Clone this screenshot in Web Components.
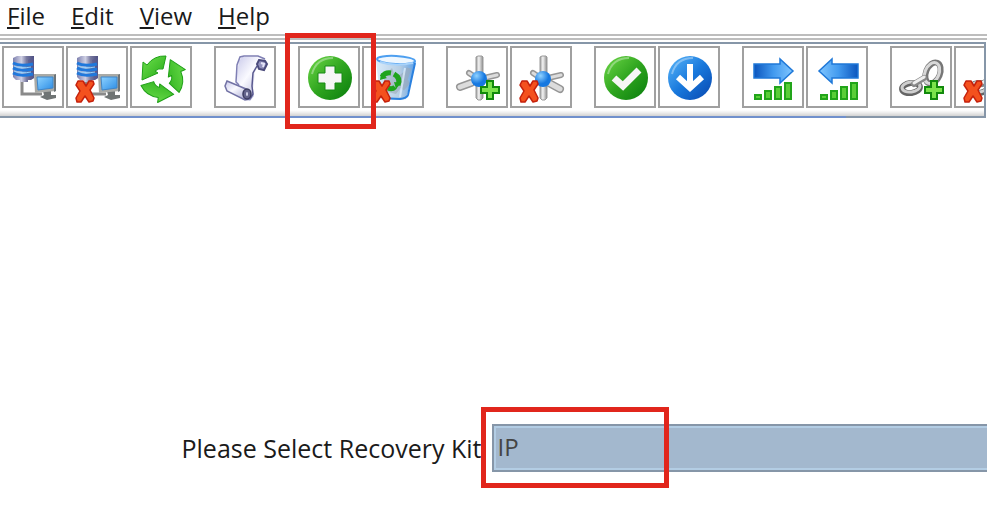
<!DOCTYPE html>
<html lang="en">
<head>
<meta charset="utf-8">
<title>Create Resource</title>
<style>
  body {
    margin: 0;
    background: #fff;
    color: #1a1a1a;
    font-family: "Open Sans", "Noto Sans", sans-serif;
    font-size: 24px;
    overflow-x: hidden;
    --frame: #8696a8;
    --highlight: #e1261c;
  }
</style>
</head>
<body>
<kit-app></kit-app>

<script>
// shared pieces used by several icons
const gradients = `
  <defs>
    <linearGradient id="green" x1="0" y1="0" x2="1" y2="1"><stop offset="0" stop-color="#6fd848"/><stop offset=".5" stop-color="#2fa51f"/><stop offset="1" stop-color="#087c0c"/></linearGradient>
    <linearGradient id="blue" x1="0" y1="0" x2="1" y2="1"><stop offset="0" stop-color="#5cb8fa"/><stop offset=".5" stop-color="#1878dc"/><stop offset="1" stop-color="#0846ae"/></linearGradient>
    <linearGradient id="leaf" x1="0" y1="0" x2="1" y2="1"><stop offset="0" stop-color="#6fe04e"/><stop offset=".6" stop-color="#42bf2c"/><stop offset="1" stop-color="#1f9a14"/></linearGradient>
    <linearGradient id="metal"><stop offset="0" stop-color="#999"/><stop offset=".4" stop-color="#f4f4f4"/><stop offset="1" stop-color="#8c8c8c"/></linearGradient>
    <linearGradient id="server"><stop offset="0" stop-color="#7d80ae"/><stop offset=".4" stop-color="#cfd0e4"/><stop offset=".65" stop-color="#77789f"/><stop offset="1" stop-color="#4c4e80"/></linearGradient>
    <linearGradient id="screen" x1="0" y1="0" x2="1" y2="1"><stop offset="0" stop-color="#8dd2ff"/><stop offset="1" stop-color="#2c8de6"/></linearGradient>
    <linearGradient id="paper" x1="0" y1="0" x2="1" y2="1"><stop offset="0" stop-color="#c9c9ea"/><stop offset=".4" stop-color="#fafaff"/><stop offset="1" stop-color="#9a9acb"/></linearGradient>
    <linearGradient id="east"><stop offset="0" stop-color="#0b55bd"/><stop offset=".5" stop-color="#429aef"/><stop offset="1" stop-color="#80c6ff"/></linearGradient>
    <linearGradient id="west"><stop offset="0" stop-color="#80c6ff"/><stop offset=".5" stop-color="#429aef"/><stop offset="1" stop-color="#0b55bd"/></linearGradient>
    <linearGradient id="glass"><stop offset="0" stop-color="#d9ebfa"/><stop offset=".6" stop-color="#b5cde3"/><stop offset="1" stop-color="#5a9fe8"/></linearGradient>
    <radialGradient id="ball" cx=".35" cy=".3"><stop offset="0" stop-color="#90d2ff"/><stop offset="1" stop-color="#1678e0"/></radialGradient>
  </defs>`;

const cross = `<path d="M12 35h5l3 5 3-5h4l1 3-4 6 4 8-1 3-4 1-4-6-4 6h-4l-1-4 4-7-4-6z" fill="#f4511e" stroke="#c5210c" stroke-width="1.5" stroke-linejoin="round"/>`;
const plus = `<path d="M41 35h6v6h6v6h-6v6h-6v-6h-6v-6h6z" fill="#7be34b" stroke="#128a0c" stroke-width="2"/>`;

const server = `
  <path d="M20 34v14h20" fill="none" stroke="#8a8a8a" stroke-width="3"/>
  <path d="M11 12l4-2h17v22l-3 2h-3v2h-8v-2h-4l-3-3z" fill="url(#server)"/>
  <path d="M26 14l6-3v21l-4 2z" fill="#5a5c91" opacity=".6"/>
  <path d="M11 17q7 4 20 1M11 22q7 4 20 1M11 27q7 4 20 1" fill="none" stroke="#1f78dc" stroke-width="3"/>
  <path d="M12 20q7 3 17 1M12 25q7 3 17 1" fill="none" stroke="#8fd1ff" stroke-width="1"/>
  <path d="M41 45h8v4h5v3l-9 2-7-3 4-2z" fill="#6f7474"/>
  <path d="M32 28h22v17l-21 2z" fill="#a9aaa6"/>
  <path d="M52 29l2-1v17l-2 1z" fill="#6d7478"/>
  <path d="M35 31h16v11l-15 2z" fill="url(#screen)" stroke="#3f86c9" stroke-width="1"/>`;

const recycleArrow = `M36 10A22 22 0 0 0 17 19L13 16 12 34 28 27 25 25A9 9 0 0 1 33 23Z`;
const disc = fill => `
  <circle cx="32" cy="32" r="22" fill="url(#${fill})"/>
  <path d="M14 28C17 17 25 12 35 12" fill="none" stroke="#fff" stroke-width="2" opacity=".35"/>`;

const arm = (d, width = 8) => `
  <path d="${d}" fill="none" stroke="#969696" stroke-width="${width}" stroke-linecap="round"/>
  <path d="${d}" fill="none" stroke="#dcdcdc" stroke-width="${width - 3}" stroke-linecap="round"/>`;
const post = `<path d="M30 11l2-1h4l1 1v41l-2 2h-3l-2-2z" fill="url(#metal)" stroke="#999" stroke-width="1"/>`;
const hub = `<circle cx="33" cy="33" r="8" fill="url(#ball)"/>`;

const bars = x => [0, 1, 2, 3].map(i => `
  <rect x="${x + i * 10 + 1}" y="${[49, 45, 41, 37][i]}" width="6" height="${[4, 8, 12, 16][i]}" fill="#5ace38" stroke="#22a51a" stroke-width="2"/>`).join("");

const chain = `
  <g fill="none" stroke-linecap="round">
    <ellipse cx="21" cy="42" rx="9" ry="5" transform="rotate(-8 21 42)" stroke="#656565" stroke-width="6"/>
    <ellipse cx="21" cy="41" rx="9" ry="5" transform="rotate(-8 21 41)" stroke="#cfcfcf" stroke-width="3"/>
    <ellipse cx="43" cy="27" rx="7" ry="11" transform="rotate(22 43 27)" stroke="#777" stroke-width="6"/>
    <ellipse cx="42" cy="27" rx="7" ry="11" transform="rotate(22 42 27)" stroke="#d8d8d8" stroke-width="3"/>
    <path d="M24 38l10-6" stroke="#888" stroke-width="6"/>
    <path d="M24 37l10-6" stroke="#eee" stroke-width="3"/>
  </g>`;

const icons = {
  connect: server,
  disconnect: server + cross,
  refresh: [0, 120, 240].map(a => `<path transform="rotate(${a} 32 32)" d="${recycleArrow}" fill="url(#leaf)" stroke="#1fa016" stroke-width="1" stroke-linejoin="round"/>`).join(""),
  log: `
    <path d="M28 11h17l6 2 2 3-2 5-4 1-2-4-4 8-2 17 1 7-4 5-8-2-6-9 1-17 2-12z" fill="url(#paper)"/>
    <path d="M25 39l-3-3 1-17 3-8 4-1h14l7 3" fill="none" stroke="#7f7fb4" stroke-width="1.5"/>
    <path d="M45 14l6 1 2 3-3 6-5-1-2-5z" fill="#9292bd" stroke="#4b4b7c" stroke-width="2"/>
    <path d="M47 17l3 1-1 3" fill="none" stroke="#e4e4f8" stroke-width="2"/>
    <path d="M43 20l-4 7-1 13 1 8-3 5" fill="none" stroke="#58588e" stroke-width="1.5"/>
    <path d="M13 35l19 8 4 4v6l-5 1-18-9-2-5z" fill="url(#paper)" stroke="#7272a5" stroke-width="1.5"/>
    <ellipse cx="33" cy="48" rx="4" ry="5" fill="#64648c" stroke="#3b3b60" stroke-width="1.5"/>
    <ellipse cx="33" cy="48" rx="1" ry="2" fill="#d8d8ee"/>`,
  create: disc("green") + `<path d="M27 20h10v7h7v10h-7v7H27v-7h-7V27h7z" fill="#f6f6f6" stroke="#168a14" stroke-width="1"/>`,
  remove: `
    <path d="M14 15L18 50q12 6 26 3L54 15z" fill="url(#glass)"/>
    <path d="M22 30l8-8 4 10 9-7-2 14-7 9-12-3z" fill="#8f9ba6" opacity=".4"/>
    <path d="M47 22l-4 12 2 3-5 6" fill="none" stroke="#99aabc" stroke-width="5" opacity=".7"/>
    <path d="M43 22l-5 29" fill="none" stroke="#e4f2ff" stroke-width="2" opacity=".7"/>
    <path d="M53 17L46 49q-1 3-8 4-10 0-19-2" fill="none" stroke="#2a80df" stroke-width="2"/>
    <ellipse cx="34" cy="14" rx="19" ry="4" transform="rotate(3 34 14)" fill="#eef7ff" stroke="#4d9ff0" stroke-width="2"/>
    <path d="M18 16q15 5 33 1" fill="none" stroke="#a9d3fa" stroke-width="2"/>
    <path d="M20 31q3-5 9-4M32 28q7 4 4 11M33 41q-3 3-7 1" fill="none" stroke="#20a41d" stroke-width="5"/>
    <path d="M18 34l1-7 6 5zM34 43l5-6-7-1z" fill="#20a41d"/>` + cross,
  addLink: arm("M23 27l6 4", 6) + arm("M51 29l-13 3", 6) + post + arm("M14 41l11-4") + hub + plus,
  removeLink: arm("M23 27l6 4", 6) + arm("M51 29l-13 3", 6) + post + arm("M50 43l-11-6") + hub + cross,
  inService: disc("green") + `<path d="M20 32l9 8 16-16" fill="none" stroke="#f6f6f6" stroke-width="7"/>`,
  outService: disc("blue") + `<path d="M32 18v24M20 31l12 11 12-11" fill="none" stroke="#fff" stroke-width="6"/>`,
  extend: `<path d="M12 18h26v-5l13 12-13 12v-5H12z" fill="url(#east)" stroke="#1f78d8" stroke-width="1.5"/>` + bars(12),
  unextend: `<path d="M52 18H26v-5L13 25l13 12v-5h26z" fill="url(#west)" stroke="#1f78d8" stroke-width="1.5"/>` + bars(14),
  addDependency: chain + plus,
  removeDependency: `<g transform="translate(4 0)">${chain}</g>` + cross
};

class KitHighlight extends HTMLElement {
  constructor() {
    super();
    this.attachShadow({ mode: "open" }).innerHTML = `
      <style>
        :host {
          position: absolute;
          z-index: 2;
          box-sizing: border-box;
          border: 5px solid var(--highlight);
          pointer-events: none;
        }
      </style>`;
  }
}
customElements.define("kit-highlight", KitHighlight);

class ToolButton extends HTMLElement {
  constructor() {
    super();
    const label = this.getAttribute("label");
    this.attachShadow({ mode: "open" }).innerHTML = `
      <style>
        :host {
          display: block;
          position: relative;
          flex: none;
        }
        button {
          display: block;
          padding: 0;
          border: 2px solid #a0a0a0;
          background: #fff;
        }
        svg {
          display: block;
          width: 58px;
          height: 58px;
        }
      </style>
      <button type="button" aria-label="${label}">
        <svg viewBox="2 2 58 58" aria-hidden="true">${gradients}${icons[this.getAttribute("icon")]}</svg>
      </button>
      <slot></slot>`;
  }
}
customElements.define("tool-button", ToolButton);

class ToolGroup extends HTMLElement {
  constructor() {
    super();
    this.attachShadow({ mode: "open" }).innerHTML = `
      <style>
        :host {
          display: flex;
          flex: none;
          gap: 2px;
        }
      </style>
      <slot></slot>`;
  }
}
customElements.define("tool-group", ToolGroup);

class ToolBar extends HTMLElement {
  constructor() {
    super();
    this.attachShadow({ mode: "open" }).innerHTML = `
      <style>
        :host {
          display: block;
          margin-right: 1px;
          border: 2px solid var(--frame);
          border-width: 2px 2px 0 0;
          background: linear-gradient(#fff 66px, #f2f2f2 68px, #d2d2d2 72px);
        }
        .items {
          display: flex;
          gap: 22px;
          padding: 2px 0 8px 2px;
          overflow-x: clip;
          overflow-y: visible;
        }
        .edge {
          height: 2px;
          background: linear-gradient(90deg, var(--frame) 3%, #7090cc 3%, #7090cc 86%, var(--frame) 86%);
        }
      </style>
      <div class="items" role="toolbar"><slot></slot></div>
      <div class="edge"></div>`;
  }
}
customElements.define("tool-bar", ToolBar);

class MenuBar extends HTMLElement {
  constructor() {
    super();
    this.attachShadow({ mode: "open" }).innerHTML = `
      <style>
        :host { display: block; }
        nav {
          display: flex;
          align-items: flex-start;
          gap: 26px;
          height: 34px;
          padding-left: 7px;
        }
        button {
          padding: 0;
          border: 0;
          background: none;
          color: inherit;
          font: inherit;
          line-height: 32px;
        }
        u {
          text-decoration-thickness: 2px;
          text-underline-offset: 2px;
        }
        .rules {
          height: 2px;
          margin-bottom: 2px;
          border: solid #bdbdbd;
          border-width: 2px 0;
        }
      </style>
      <nav>
        <button type="button"><u>F</u>ile</button>
        <button type="button"><u>E</u>dit</button>
        <button type="button"><u>V</u>iew</button>
        <button type="button"><u>H</u>elp</button>
      </nav>
      <div class="rules"></div>`;
  }
}
customElements.define("menu-bar", MenuBar);

class KitSelect extends HTMLElement {
  constructor() {
    super();
    this.attachShadow({ mode: "open" }).innerHTML = `
      <style>
        :host {
          display: flex;
          align-items: center;
        }
        label {
          flex: 0 0 calc(50% - 2px);
          box-sizing: border-box;
          padding-right: 10px;
          font-size: 25px;
          text-align: right;
          white-space: nowrap;
        }
        .field {
          position: relative;
          flex: 1;
          min-width: 0;
        }
        select {
          display: block;
          appearance: none;
          box-sizing: border-box;
          width: 100%;
          height: 48px;
          padding: 0 4px 4px;
          border: 2px solid var(--frame);
          border-right: 0;
          border-radius: 0;
          outline: 0;
          background: #a3b8ce;
          box-shadow: inset 2px 2px #b3cde4, inset 0 -2px #b3cde4;
          color: #444;
          font: inherit;
        }
        kit-highlight {
          left: -11px;
          top: -17px;
          bottom: -16px;
          width: 188px;
        }
      </style>
      <label for="kit"><slot></slot></label>
      <div class="field">
        <select id="kit"><option>IP</option></select>
        <kit-highlight></kit-highlight>
      </div>`;
  }
}
customElements.define("kit-select", KitSelect);

const templateApp = document.createElement("template");
templateApp.innerHTML = `
  <style>
    :host { display: block; }
    main { padding: 306px 0 44px; }
    .picked {
      left: -13px;
      top: -13px;
      right: -16px;
      bottom: -21px;
    }
    .front { z-index: 1; }
  </style>
  <menu-bar></menu-bar>
  <tool-bar>
    <tool-group>
      <tool-button icon="connect" label="Connect"></tool-button>
      <tool-button icon="disconnect" label="Disconnect"></tool-button>
      <tool-button icon="refresh" label="Refresh"></tool-button>
    </tool-group>
    <tool-group>
      <tool-button icon="log" label="View Logs"></tool-button>
    </tool-group>
    <tool-group>
      <tool-button class="front" icon="create" label="Create Resource Hierarchy"><kit-highlight class="picked"></kit-highlight></tool-button>
      <tool-button icon="remove" label="Delete Resource Hierarchy"></tool-button>
    </tool-group>
    <tool-group>
      <tool-button icon="addLink" label="Create Comm Path"></tool-button>
      <tool-button icon="removeLink" label="Delete Comm Path"></tool-button>
    </tool-group>
    <tool-group>
      <tool-button icon="inService" label="In Service"></tool-button>
      <tool-button icon="outService" label="Out of Service"></tool-button>
    </tool-group>
    <tool-group>
      <tool-button icon="extend" label="Extend Resource Hierarchy"></tool-button>
      <tool-button icon="unextend" label="Unextend Resource Hierarchy"></tool-button>
    </tool-group>
    <tool-group>
      <tool-button icon="addDependency" label="Create Dependency"></tool-button>
      <tool-button icon="removeDependency" label="Delete Dependency"></tool-button>
    </tool-group>
  </tool-bar>
  <main>
    <kit-select>Please Select Recovery Kit</kit-select>
  </main>
`;

class KitApp extends HTMLElement {
  constructor() {
    super();
    this.attachShadow({ mode: "open" }).appendChild(templateApp.content.cloneNode(true));
  }
}
customElements.define("kit-app", KitApp);
</script>
</body>
</html>
